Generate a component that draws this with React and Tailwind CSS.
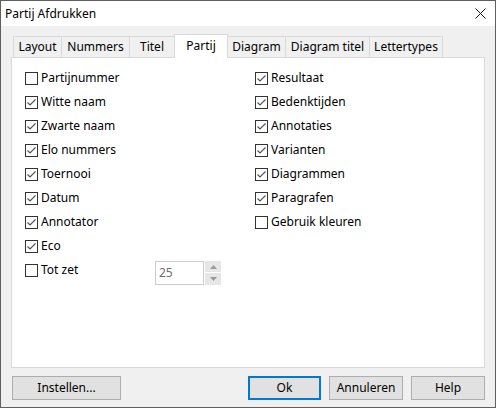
import React from "react";

const leftItems = [
  { label: "Partijnummer", checked: false },
  { label: "Witte naam", checked: true },
  { label: "Zwarte naam", checked: true },
  { label: "Elo nummers", checked: true },
  { label: "Toernooi", checked: true },
  { label: "Datum", checked: true },
  { label: "Annotator", checked: true },
  { label: "Eco", checked: true }
];

const rightItems = [
  { label: "Resultaat", checked: true },
  { label: "Bedenktijden", checked: true },
  { label: "Annotaties", checked: true },
  { label: "Varianten", checked: true },
  { label: "Diagrammen", checked: true },
  { label: "Paragrafen", checked: true },
  { label: "Gebruik kleuren", checked: false }
];

const tabs = [
  { label: "Layout", w: "w-[49px]" },
  { label: "Nummers", w: "w-[69px]" },
  { label: "Titel", w: "w-[46px]" },
  { label: "Partij", w: "w-[54px]", active: true },
  { label: "Diagram", w: "w-[59px]" },
  { label: "Diagram titel", w: "w-[85px]" },
  { label: "Lettertypes", w: "w-[74px]" }
];

function Box({ checked }) {
  return (
    <span className="mt-[6px] flex h-[13px] w-[13px] shrink-0 items-center justify-center border border-[#333333] bg-white">
      {checked && (
        <svg width="11" height="11" viewBox="0 0 11 11">
          <path d="M1.5 5.5 L4 8 L9.5 2.5" fill="none" stroke="#555555" strokeWidth="1.2" />
        </svg>
      )}
    </span>
  );
}

function Check({ label, checked, children }) {
  return (
    <div className="flex h-[24px] items-start">
      <Box checked={checked} />
      <span className="ml-[3px] leading-[24px] text-black">{label}</span>
      {children}
    </div>
  );
}

function Button({ label, width, primary }) {
  return (
    <button
      className={`h-[24px] ${width} bg-[#e1e1e1] text-black ${
        primary ? "border-2 border-[#0078d7]" : "border border-[#adadad]"
      }`}
    >
      {label}
    </button>
  );
}

export default function App() {
  return (
    <div
      className="flex h-[408px] w-[496px] flex-col border border-[#5f5f5f] bg-[#f0f0f0] text-[12px] text-black"
      style={{ fontFamily: '"Noto Sans", "Open Sans", sans-serif' }}
    >
      <div className="flex h-[25px] shrink-0 items-center justify-between bg-white pl-[4px] pr-[9px]">
        <span className="leading-none">Partij Afdrukken</span>
        <svg width="11" height="11" viewBox="0 0 11 11">
          <path d="M0.5 0.5 L10.5 10.5 M10.5 0.5 L0.5 10.5" stroke="#111111" strokeWidth="1" />
        </svg>
      </div>

      <div className="relative z-10 mt-[8px] flex h-[23px] items-end pl-[12px]">
        {tabs.map((t, i) =>
          t.active ? (
            <div
              key={t.label}
              className={`-ml-px -mb-px flex h-[24px] ${t.w} items-start justify-center border border-b-0 border-[#d9d9d9] bg-white pt-[2px]`}
            >
              {t.label}
            </div>
          ) : (
            <div
              key={t.label}
              className={`${i > 0 ? "-ml-px" : ""} flex h-[21px] ${t.w} items-center justify-center border border-b-0 border-[#d9d9d9] bg-[#f0f0f0] pb-px`}
            >
              {t.label}
            </div>
          )
        )}
      </div>

      <div className="ml-[10px] grid h-[311px] w-[474px] grid-cols-[230px_1fr] border border-[#d9d9d9] bg-white pl-[13px] pt-[8px]">
        <div>
          {leftItems.map((it) => (
            <Check key={it.label} {...it} />
          ))}
          <div className="flex h-[24px] items-start">
            <Box checked={false} />
            <span className="ml-[3px] w-[114px] leading-[24px]">Tot zet</span>
            <div className="mt-[3px] flex h-[24px]">
              <div className="flex w-[49px] items-center border border-[#cccccc] pl-[3px] text-[#6d6d6d]">25</div>
              <div className="ml-px flex w-[16px] flex-col gap-px">
                <div className="flex h-[11px] items-center justify-center bg-[#e6e6e6]">
                  <svg width="7" height="4" viewBox="0 0 7 4">
                    <path d="M0 4 L3.5 0 L7 4 Z" fill="#9a9a9a" />
                  </svg>
                </div>
                <div className="flex h-[12px] items-center justify-center bg-[#e6e6e6]">
                  <svg width="7" height="4" viewBox="0 0 7 4">
                    <path d="M0 0 L3.5 4 L7 0 Z" fill="#9a9a9a" />
                  </svg>
                </div>
              </div>
            </div>
          </div>
        </div>
        <div>
          {rightItems.map((it) => (
            <Check key={it.label} {...it} />
          ))}
        </div>
      </div>

      <div className="mt-[8px] flex w-[484px] items-center pl-[11px]">
        <Button label="Instellen..." width="w-[109px]" />
        <div className="ml-auto flex gap-[8px]">
          <Button label="Ok" width="w-[73px]" primary />
          <Button label="Annuleren" width="w-[74px]" />
          <Button label="Help" width="w-[74px]" />
        </div>
      </div>
    </div>
  );
}
